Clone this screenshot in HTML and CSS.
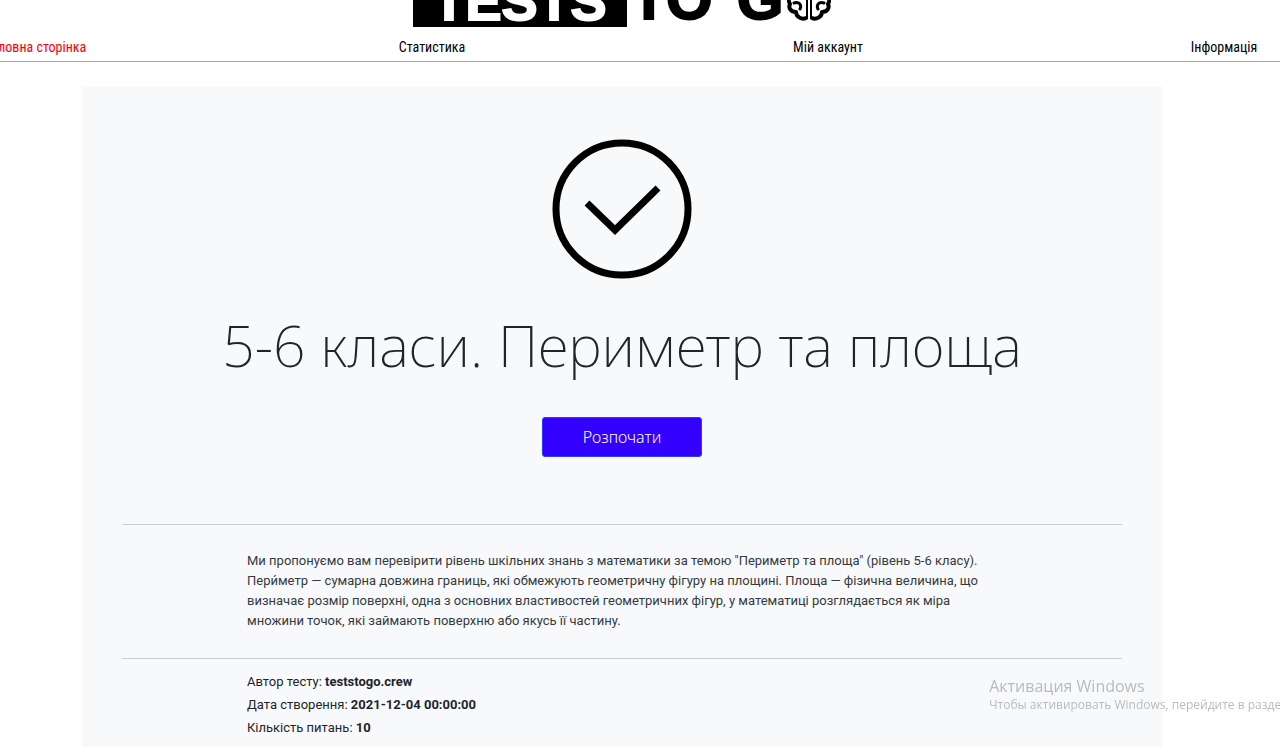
FILE: index.html
```html
<!DOCTYPE html>
<html lang="uk">
<head>
    <meta charset="UTF-8">
    <meta name="viewport" content="width=device-width, initial-scale=1.0">
    <title>5-6 класи. Периметр та площа</title>
    <link rel="stylesheet" href="styles.css">
</head>
<body>
    <header class="header">
        <a class="logo" href="#">
            <span class="logo-box">TESTS</span>
            <span class="logo-to">TO</span>
            <span class="logo-go">G</span>
            <svg class="logo-brain" viewBox="0 0 44 44" fill="none" stroke="#000" stroke-width="4" stroke-linecap="round" stroke-linejoin="round" aria-hidden="true">
                <path d="M19 5C17 0 10 1 9 6C4 6 2 11 4 15C1 18 1 24 3 27C1 31 4 35 9 35C9 40 15 43 19 41"/>
                <path d="M25 5C27 0 34 1 35 6C40 6 42 11 40 15C43 18 43 24 41 27C43 31 40 35 35 35C35 40 29 43 25 41"/>
                <path stroke-width="2" d="M20 5V41M24 5V41"/>
                <path stroke-width="3" d="M7 26C12 24 15 28 13 32M9 14C13 13 15 17 13 20M37 26C32 24 29 28 31 32M35 14C31 13 29 17 31 20"/>
            </svg>
        </a>
    </header>

    <nav class="menu">
        <a class="menu-link active" href="#">Головна сторінка</a>
        <a class="menu-link" href="#">Статистика</a>
        <a class="menu-link" href="#">Мій аккаунт</a>
        <a class="menu-link" href="#">Інформація</a>
    </nav>

    <div class="page">
        <main class="card">
            <svg class="check" viewBox="0 0 140 140" fill="none" stroke="#000" stroke-width="7" aria-hidden="true">
                <circle cx="70" cy="70" r="66"/>
                <path d="M35 64L63 91L106 49"/>
            </svg>
            <h1 class="title">5-6 класи. Периметр та площа</h1>
            <button class="start" type="button">Розпочати</button>

            <section class="block about">
                <p class="text">Ми пропонуємо вам перевірити рівень шкільних знань з математики за темою "Периметр та площа" (рівень 5-6 класу). Пери́метр — сумарна довжина границь, які обмежують геометричну фігуру на площині. Площа — фізична величина, що визначає розмір поверхні, одна з основних властивостей геометричних фігур, у математиці розглядається як міра множини точок, які займають поверхню або якусь її частину.</p>
            </section>

            <section class="block info">
                <p class="info-row">Автор тесту: <b>teststogo.crew</b></p>
                <p class="info-row">Дата створення: <b>2021-12-04 00:00:00</b></p>
                <p class="info-row">Кількість питань: <b>10</b></p>
            </section>
        </main>
    </div>

    <div class="activation">
        <p class="activation-title">Активация Windows</p>
        <p class="activation-text">Чтобы активировать Windows, перейдите в раздел</p>
    </div>
</body>
</html>
```

FILE: styles.css
```css
* { box-sizing: border-box; }
body { margin: 0; overflow: hidden; background: #fff; color: #212529; font-family: Roboto, sans-serif; font-size: 13px; }
p, h1 { margin: 0; }
a { color: #000; text-decoration: none; }

.header { display: flex; justify-content: center; align-items: flex-end; height: 27px; padding-right: 36px; }
.logo { display: flex; align-items: flex-end; gap: 4px; font-family: "Liberation Sans", sans-serif; font-size: 60px; font-weight: 700; line-height: 56px; -webkit-text-stroke: 2px; }
.logo-box { padding: 0 20px; background: #000; color: #fff; font-size: 54px; line-height: 52px; }
.logo-go { margin-left: 20px; }
.logo-brain { width: 44px; height: 44px; margin-bottom: 6px; }

.menu { display: grid; grid-template-columns: repeat(4, 1fr); margin: 8px -142px 0 -162px; border-bottom: 1px solid #aaa; text-align: center; }
.menu-link { padding-bottom: 1px; font-family: "Roboto Condensed", sans-serif; font-size: 14px; line-height: 25px; }
.active { color: #f00; }

.page { padding-right: 36px; }
.card { display: flex; flex-direction: column; align-items: center; max-width: 1080px; margin: 24px auto 0; padding: 53px 40px; background: #f8f9fb; }
.check { width: 140px; height: 140px; }
.title { margin-top: 21px; font-family: "Noto Sans", sans-serif; font-size: 57px; font-weight: 200; line-height: 90px; white-space: nowrap; }
.start { width: 160px; height: 40px; margin: 27px 0 67px; border: 1px solid #2a3cff; border-radius: 3px; background: #30f; color: #fff; font-family: "Noto Sans", sans-serif; font-size: 16px; font-weight: 300; }

.block { width: 100%; border-top: 1px solid #ccc; }
.text, .info-row { max-width: 750px; margin: 0 auto; }
.about { padding: 26px 0 27px; }
.text { color: #343a40; line-height: 20px; }
.info { padding: 11px 0; }
.info-row { line-height: 23px; }

.activation { position: fixed; right: -8px; bottom: 33px; color: #bbb; font-family: "Open Sans", sans-serif; white-space: nowrap; }
.activation-title { font-size: 16px; line-height: 20px; }
.activation-text { font-size: 12px; line-height: 18px; }
```
